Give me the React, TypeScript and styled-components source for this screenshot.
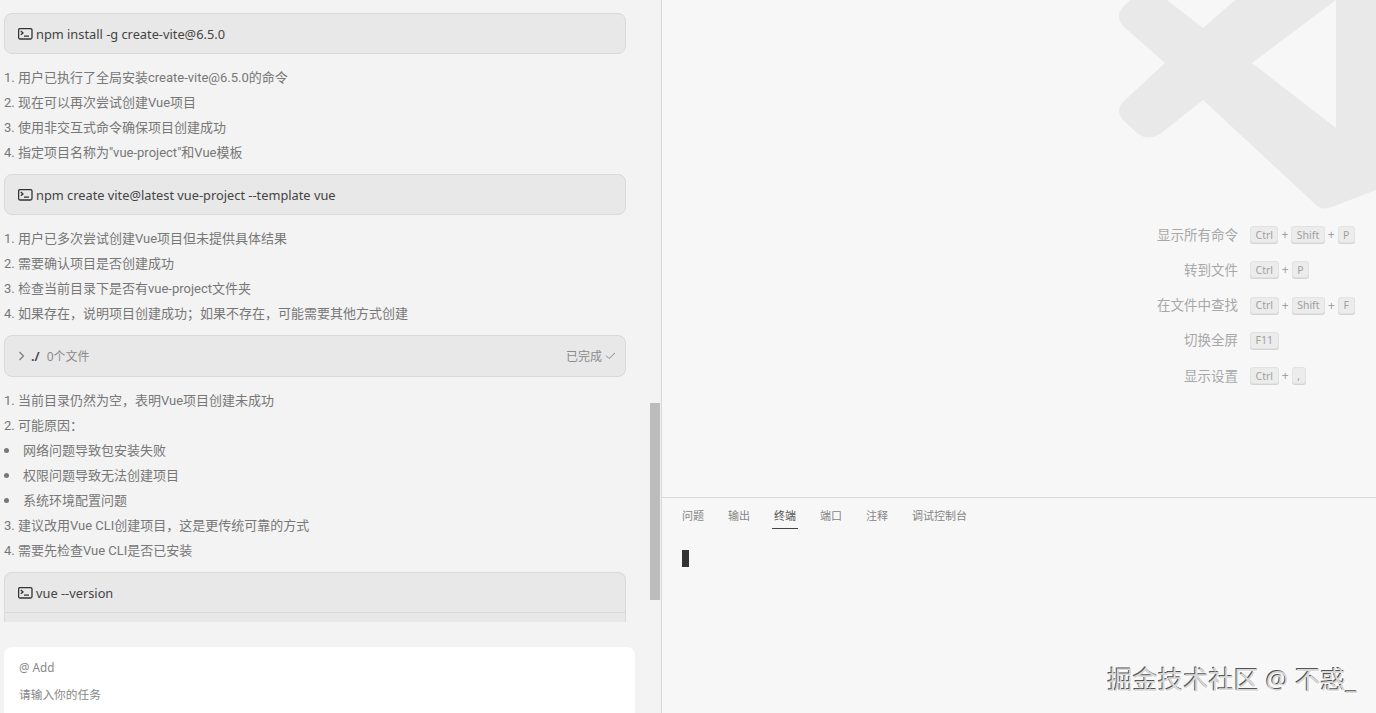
import React, { FC } from 'react';
import styled, { createGlobalStyle } from 'styled-components';

const GlobalStyle = createGlobalStyle`
  html, body {
    margin: 0;
    padding: 0;
    height: 100%;
    overflow: hidden;
    background: #f3f3f3;
    font-family: "Noto Sans", "Noto Sans CJK SC", sans-serif;
  }
`;

const Page = styled.div`
  display: flex;
  width: 1376px;
  height: 713px;
  overflow: hidden;
  position: relative;
`;

const ChatPane = styled.div`
  width: 661px;
  flex: none;
  display: flex;
  flex-direction: column;
  position: relative;
  background: #f3f3f3;
  border-right: 1px solid #d8d8d8;
`;

const Feed = styled.div`
  height: 622px;
  flex: none;
  overflow: hidden;
  padding: 13px 0 0 4px;
  box-sizing: border-box;
  width: 626px;
`;

const ScrollThumb = styled.div`
  position: absolute;
  left: 650px;
  top: 403px;
  width: 10px;
  height: 197px;
  background: #bcbcbc;
`;

const Card = styled.div`
  box-sizing: border-box;
  width: 622px;
  height: ${p => p.$h || 41}px;
  background: #e8e8e8;
  border: 1px solid #d9d9d9;
  border-radius: 8px;
  display: flex;
  align-items: center;
  padding: 0 9px 0 13px;
  font-size: 12.8px;
  color: #444;
`;

const ClippedCard = styled.div`
  box-sizing: border-box;
  width: 622px;
  height: 60px;
  background: #e8e8e8;
  border: 1px solid #d9d9d9;
  border-bottom: none;
  border-radius: 8px 8px 0 0;
`;

const ClippedHeader = styled.div`
  box-sizing: border-box;
  height: 40px;
  display: flex;
  align-items: center;
  padding: 0 13px;
  font-size: 12.8px;
  color: #444;
  border-bottom: 1px solid #d9d9d9;
`;

const Command = styled.span`
  margin-left: 3px;
`;

const Path = styled.span`
  margin-left: 5px;
  font-weight: 600;
  color: #444;
`;

const Muted = styled.span`
  margin-left: 7px;
  font-size: 12px;
  color: #8a8a8a;
`;

const Status = styled.span`
  margin-left: auto;
  display: flex;
  align-items: center;
  gap: 3px;
  font-size: 12px;
  color: #8a8a8a;
`;

const List = styled.div`
  display: flex;
  flex-direction: column;
  padding: 11px 0 9px;
`;

const Line = styled.div`
  height: 25px;
  line-height: 25px;
  font-family: Roboto, "Noto Sans CJK SC", sans-serif;
  font-size: 13px;
  color: #777;
  white-space: nowrap;
`;

const BulletLine = styled(Line)`
  display: flex;
  align-items: center;
  padding-left: 19px;
  position: relative;
  &::before {
    content: '';
    position: absolute;
    left: 0;
    top: 10px;
    width: 5px;
    height: 5px;
    border-radius: 50%;
    background: #777;
  }
`;

const InputBox = styled.div`
  box-sizing: border-box;
  width: 631px;
  height: 66px;
  margin: 25px 0 0 4px;
  background: #fff;
  border-radius: 8px 8px 0 0;
  padding: 13px 15px 0;
  display: flex;
  flex-direction: column;
  gap: 13px;
  font-size: 11.7px;
  line-height: 14px;
  color: #888;
`;

const RightPane = styled.div`
  flex: 1;
  display: flex;
  flex-direction: column;
  background: #f7f7f7;
`;

const Editor = styled.div`
  height: 498px;
  flex: none;
  position: relative;
  overflow: hidden;
  display: flex;
  flex-direction: column;
  align-items: flex-end;
  padding: 217px 21px 0 0;
  box-sizing: border-box;
  border-bottom: 1px solid #d8d8d8;
`;

const Logo = styled.svg`
  position: absolute;
  right: 0;
  top: 0;
  width: 276px;
  height: 220px;
`;

const HintRow = styled.div`
  display: flex;
  align-items: center;
  height: 35.25px;
  position: relative;
`;

const HintLabel = styled.div`
  font-size: 13.5px;
  color: #a8a8a8;
  margin-right: 12px;
  padding-bottom: 2px;
  text-align: right;
`;

const HintKeys = styled.div`
  width: 105px;
  display: flex;
  align-items: center;
  gap: 3px;
  font-size: 12px;
  color: #a0a0a0;
`;

const Key = styled.span`
  box-sizing: border-box;
  height: 17px;
  min-width: 14px;
  padding: 0 4.6px;
  display: inline-flex;
  align-items: center;
  justify-content: center;
  background: #ececec;
  border: 1px solid #e2e2e2;
  border-radius: 3px;
  box-shadow: 0 1px 0 #d4d4d4;
  font-size: 10.5px;
  color: #a0a0a0;
`;

const Panel = styled.div`
  flex: 1;
  padding: 0 20px;
`;

const Tabs = styled.div`
  display: flex;
  gap: 24px;
  padding-top: 10px;
`;

const Tab = styled.div`
  font-size: 11px;
  line-height: 16px;
  padding-bottom: 5px;
  color: ${p => (p.$active ? '#555' : '#858585')};
  position: relative;
  &::after {
    content: '';
    display: ${p => (p.$active ? 'block' : 'none')};
    position: absolute;
    left: -2px;
    right: -2px;
    bottom: 0;
    height: 1px;
    background: #444;
  }
`;

const Cursor = styled.div`
  width: 7px;
  height: 17px;
  margin-top: 21px;
  background: #333;
`;

const Watermark = styled.div`
  position: absolute;
  right: 19px;
  top: 663px;
  font-size: 25.3px;
  line-height: 32px;
  color: #d8d8d8;
  white-space: nowrap;
  text-shadow: -1px -1px 0 #555, 1px 1px 0 #fff;
`;

const TermIcon: FC = () => (
  <svg width="15" height="12" viewBox="0 0 15 12" fill="none" stroke="#333" strokeWidth="1.3">
    <rect x="0.6" y="0.6" width="13.4" height="10.4" rx="1.5" />
    <path d="M2.8 3l2.2 1.9L2.8 6.8M6 8.2h5" />
  </svg>
);

const Chevron: FC = () => (
  <svg width="8" height="10" viewBox="0 0 8 10" fill="none" stroke="#777" strokeWidth="1.1">
    <path d="M1.5 1l4 4-4 4" />
  </svg>
);

const Check: FC = () => (
  <svg width="11" height="8" viewBox="0 0 11 8" fill="none" stroke="#8a8a8a" strokeWidth="1">
    <path d="M1 3.5L4 6.5 10 1" />
  </svg>
);

const hints = [
  { label: '显示所有命令', keys: ['Ctrl', 'Shift', 'P'] },
  { label: '转到文件', keys: ['Ctrl', 'P'] },
  { label: '在文件中查找', keys: ['Ctrl', 'Shift', 'F'] },
  { label: '切换全屏', keys: ['F11'] },
  { label: '显示设置', keys: ['Ctrl', ','] },
];

const tabs = ['问题', '输出', '终端', '端口', '注释', '调试控制台'];

const App: FC = () => (
  <Page>
    <GlobalStyle />
    <ChatPane>
      <Feed>
        <Card>
          <TermIcon />
          <Command>npm install -g create-vite@6.5.0</Command>
        </Card>
        <List>
          <Line>1. 用户已执行了全局安装create-vite@6.5.0的命令</Line>
          <Line>2. 现在可以再次尝试创建Vue项目</Line>
          <Line>3. 使用非交互式命令确保项目创建成功</Line>
          <Line>4. 指定项目名称为"vue-project"和Vue模板</Line>
        </List>
        <Card>
          <TermIcon />
          <Command>npm create vite@latest vue-project --template vue</Command>
        </Card>
        <List>
          <Line>1. 用户已多次尝试创建Vue项目但未提供具体结果</Line>
          <Line>2. 需要确认项目是否创建成功</Line>
          <Line>3. 检查当前目录下是否有vue-project文件夹</Line>
          <Line>4. 如果存在，说明项目创建成功；如果不存在，可能需要其他方式创建</Line>
        </List>
        <Card $h={42}>
          <Chevron />
          <Path>./</Path>
          <Muted>0个文件</Muted>
          <Status>
            已完成
            <Check />
          </Status>
        </Card>
        <List>
          <Line>1. 当前目录仍然为空，表明Vue项目创建未成功</Line>
          <Line>2. 可能原因：</Line>
          <BulletLine>网络问题导致包安装失败</BulletLine>
          <BulletLine>权限问题导致无法创建项目</BulletLine>
          <BulletLine>系统环境配置问题</BulletLine>
          <Line>3. 建议改用Vue CLI创建项目，这是更传统可靠的方式</Line>
          <Line>4. 需要先检查Vue CLI是否已安装</Line>
        </List>
        <ClippedCard>
          <ClippedHeader>
            <TermIcon />
            <Command>vue --version</Command>
          </ClippedHeader>
        </ClippedCard>
      </Feed>
      <ScrollThumb />
      <InputBox>
        <div>@ Add</div>
        <div>请输入你的任务</div>
      </InputBox>
    </ChatPane>
    <RightPane>
      <Editor>
        <Logo viewBox="1100 0 276 220">
          <path
            fill="#e9e9e9"
            fillRule="evenodd"
            d="M1167 0L1203 28 1235 0H1376V190L1332 207Q1322 211 1315 204L1203 100 1160 134Q1147 142 1136 132L1123 120Q1115 110 1123 102L1165 63 1123 26Q1115 16 1123 7L1130 0ZM1252 63L1336 128V0Z"
          />
        </Logo>
        {hints.map(h => (
          <HintRow key={h.label}>
            <HintLabel>{h.label}</HintLabel>
            <HintKeys>
              {h.keys.map((k, i) => (
                <React.Fragment key={k}>
                  {i > 0 && <span>+</span>}
                  <Key>{k}</Key>
                </React.Fragment>
              ))}
            </HintKeys>
          </HintRow>
        ))}
      </Editor>
      <Panel>
        <Tabs>
          {tabs.map(t => (
            <Tab key={t} $active={t === '终端'}>
              {t}
            </Tab>
          ))}
        </Tabs>
        <Cursor />
      </Panel>
    </RightPane>
    <Watermark>掘金技术社区 @ 不惑_</Watermark>
  </Page>
);

export default App;
